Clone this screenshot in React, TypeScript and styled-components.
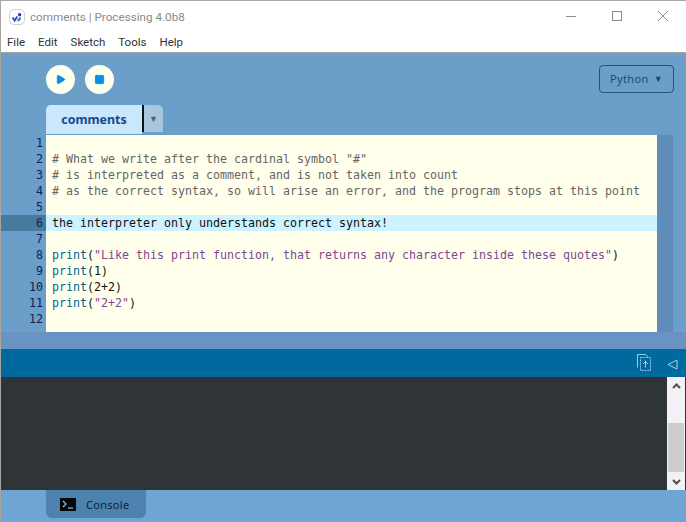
import styled, { createGlobalStyle } from "styled-components";
import { Play, Square } from "lucide-react";

const GlobalStyle = createGlobalStyle`
  html, body {
    margin: 0;
    padding: 0;
    background: #6b9fc9;
  }
`;

const Window = styled.div`
  width: 686px;
  height: 522px;
  display: flex;
  flex-direction: column;
  overflow: hidden;
  box-sizing: border-box;
  border-left: 1px solid #a8a59e;
  font-family: Roboto, sans-serif;
`;

const TitleBar = styled.div`
  height: 30px;
  background: #fff;
  border-top: 1px solid #a9a9a9;
  box-sizing: border-box;
  display: flex;
  align-items: center;
  padding: 2px 0 0 8px;
  color: #8a8a8a;
`;

const AppIcon = styled.svg`
  width: 16px;
  height: 16px;
  margin-right: 5px;
`;

const TitleText = styled.span`
  flex: 1;
  font-size: 11.7px;
`;

const WinButtons = styled.div`
  display: flex;
  align-items: center;
  margin-bottom: 2px;
`;

const WinButton = styled.svg`
  width: 46px;
  height: 12px;
`;

const MenuBar = styled.div`
  height: 23px;
  background: #fff;
  border-bottom: 1px solid #a4a4a4;
  box-sizing: border-box;
  display: flex;
  align-items: center;
  padding: 2px 0 0 6px;
  gap: 13px;
  font-size: 11.5px;
  color: #333;
`;

const Header = styled.div`
  height: 82px;
  background: #6b9fc9;
  display: flex;
  flex-direction: column;
  padding-left: 45px;
  box-sizing: border-box;
  position: relative;
`;

const Controls = styled.div`
  display: flex;
  gap: 10px;
  padding-top: 12px;
  height: 41px;
`;

const RoundButton = styled.button`
  width: 29px;
  height: 29px;
  border: 0;
  padding: 0;
  border-radius: 50%;
  background: #fffff0;
  display: flex;
  align-items: center;
  justify-content: center;
`;

const ModeButton = styled.div`
  position: absolute;
  top: 12px;
  right: 12px;
  width: 75px;
  height: 28px;
  box-sizing: border-box;
  padding-bottom: 2px;
  border: 1px solid #1a5880;
  border-radius: 4px;
  color: #0f4f7d;
  font-family: "Noto Sans", sans-serif;
  font-size: 11px;
  display: flex;
  align-items: center;
  justify-content: center;
  gap: 5px;
  letter-spacing: 0.4px;
`;

const Caret = styled.span`
  font-size: 9px;
`;

const TabRow = styled.div`
  display: flex;
  align-items: flex-end;
  height: 29px;
  margin-top: -1px;
`;

const Tab = styled.div`
  width: 96px;
  height: 29px;
  background: #c9e8fd;
  border-radius: 5px 0 0 0;
  box-sizing: border-box;
  display: flex;
  align-items: center;
  justify-content: center;
  color: #17468f;
  font-family: "Noto Sans", sans-serif;
  font-size: 12.4px;
  font-weight: 700;
`;

const TabMenu = styled.div`
  width: 21px;
  height: 27px;
  align-self: flex-start;
  background: #a9c6df;
  border-left: 2px solid #111;
  border-radius: 0 5px 0 0;
  box-sizing: border-box;
  display: flex;
  align-items: center;
  justify-content: center;
  color: #555f6a;
  font-size: 9px;
`;

const EditorRow = styled.div`
  height: 197px;
  display: flex;
  background: #6b9fc9;
`;

const Gutter = styled.div`
  width: 45px;
  flex-shrink: 0;
`;

const Code = styled.div`
  width: 611px;
  flex-shrink: 0;
  background: #ffffec;
`;

const Track = styled.div`
  width: 16px;
  background: #5f8db9;
`;

const Mono = `
  font-family: "DejaVu Sans Mono", monospace;
  font-size: 11.63px;
  line-height: 16px;
  height: 16px;
  white-space: pre;
`;

const LineNo = styled.div<{ $active?: boolean }>`
  ${Mono}
  text-align: right;
  padding-right: 3px;
  color: #0f1f4d;
  background: ${(p) => (p.$active ? "#48799f" : "transparent")};
`;

const Line = styled.div<{ $active?: boolean }>`
  ${Mono}
  padding-left: 6px;
  color: #111;
  background: ${(p) => (p.$active ? "#ccf3ff" : "transparent")};
`;

const Comment = styled.span`
  color: #666;
`;

const Fn = styled.span`
  color: #006699;
`;

const Str = styled.span`
  color: #7d4793;
`;

const Band = styled.div`
  height: 17px;
  background: #6a93c3;
`;

const StatusBar = styled.div`
  height: 28px;
  background: #006a9e;
  display: flex;
  align-items: center;
  justify-content: flex-end;
  gap: 15px;
  padding-right: 8px;
`;

const ConsoleArea = styled.div`
  height: 113px;
  display: flex;
  background: #2f3437;
`;

const ConsoleText = styled.div`
  flex: 1;
`;

const ScrollBar = styled.div`
  width: 18px;
  margin-right: 1px;
  background: #f3f1f6;
  display: flex;
  flex-direction: column;
`;

const ScrollArrow = styled.div`
  height: 17px;
  display: flex;
  align-items: center;
  justify-content: center;
`;

const ScrollSpace = styled.div`
  flex: 1;
  padding-top: 29px;
  display: flex;
`;

const Thumb = styled.div`
  flex: 1;
  height: 49px;
  margin: 0 1px;
  background: #cdcdcd;
`;

const Footer = styled.div`
  flex: 1;
  background: #6ea5d3;
  padding-left: 45px;
`;

const ConsoleTab = styled.div`
  width: 100px;
  height: 28px;
  background: #4c82ad;
  border-radius: 0 0 6px 6px;
  display: flex;
  align-items: center;
  gap: 10px;
  padding-left: 14px;
  box-sizing: border-box;
  color: #0d2340;
  font-family: "Noto Sans", sans-serif;
  font-size: 11px;
  letter-spacing: 0.3px;
`;

const Prompt = styled.svg`
  width: 16px;
  height: 13px;
`;

const ClipboardIcon = styled.svg`
  width: 15px;
  height: 18px;
  fill: none;
  stroke: #9ccbe6;
`;

const CollapseIcon = styled.svg`
  width: 11px;
  height: 11px;
  margin-top: 2px;
  fill: none;
  stroke: #a9d3ea;
`;

const App = () => {
  return (
    <Window>
      <GlobalStyle />
      <TitleBar>
        <AppIcon viewBox="0 0 16 16">
          <rect x="0.5" y="0.5" width="15" height="15" rx="4" fill="#fff" stroke="#cfd3cf" />
          <path d="M3.5 8.5l2.2 3 2.6-4" fill="none" stroke="#2a52c4" strokeWidth="2" />
          <circle cx="10.6" cy="5.8" r="1.7" fill="#1f3fa8" />
          <path d="M11 8.5a3 3 0 0 1-2.6 3" fill="none" stroke="#2f6ad0" strokeWidth="2" />
        </AppIcon>
        <TitleText>comments | Processing 4.0b8</TitleText>
        <WinButtons>
          <WinButton viewBox="0 0 46 12">
            <path d="M18 6.5h10" stroke="#8c8c8c" />
          </WinButton>
          <WinButton viewBox="0 0 46 12">
            <rect x="18.5" y="1.5" width="9" height="9" fill="none" stroke="#8c8c8c" />
          </WinButton>
          <WinButton viewBox="0 0 46 12">
            <path d="M18 1l10 10M28 1L18 11" stroke="#8c8c8c" />
          </WinButton>
        </WinButtons>
      </TitleBar>
      <MenuBar>
        <span>File</span>
        <span>Edit</span>
        <span>Sketch</span>
        <span>Tools</span>
        <span>Help</span>
      </MenuBar>
      <Header>
        <Controls>
          <RoundButton>
            <Play size={11} color="#0a8fe6" fill="#0a8fe6" />
          </RoundButton>
          <RoundButton>
            <Square size={11} color="#0a8fe6" fill="#0a8fe6" />
          </RoundButton>
        </Controls>
        <ModeButton>
          Python <Caret>▼</Caret>
        </ModeButton>
        <TabRow>
          <Tab>comments</Tab>
          <TabMenu>▼</TabMenu>
        </TabRow>
      </Header>
      <EditorRow>
        <Gutter>
          {[1, 2, 3, 4, 5, 6, 7, 8, 9, 10, 11, 12].map((n) => (
            <LineNo key={n} $active={n === 6}>
              {n}
            </LineNo>
          ))}
        </Gutter>
        <Code>
          <Line> </Line>
          <Line>
            <Comment># What we write after the cardinal symbol "#"</Comment>
          </Line>
          <Line>
            <Comment># is interpreted as a comment, and is not taken into count</Comment>
          </Line>
          <Line>
            <Comment># as the correct syntax, so will arise an error, and the program stops at this point</Comment>
          </Line>
          <Line> </Line>
          <Line $active>the interpreter only understands correct syntax!</Line>
          <Line> </Line>
          <Line>
            <Fn>print</Fn>(<Str>"Like this print function, that returns any character inside these quotes"</Str>)
          </Line>
          <Line>
            <Fn>print</Fn>(1)
          </Line>
          <Line>
            <Fn>print</Fn>(2+2)
          </Line>
          <Line>
            <Fn>print</Fn>(<Str>"2+2"</Str>)
          </Line>
          <Line> </Line>
        </Code>
        <Track />
      </EditorRow>
      <Band />
      <StatusBar>
        <ClipboardIcon viewBox="0 0 15 18">
          <path d="M0.5 13.5v-13h8l2 2v1" />
          <path d="M3.5 3.5h10v13h-10z" strokeDasharray="2 1" />
          <path d="M8.5 6.5v7M6 10l2.5-2.5L11 10" />
        </ClipboardIcon>
        <CollapseIcon viewBox="0 0 11 11">
          <path d="M10 1v9L1 5.5z" />
        </CollapseIcon>
      </StatusBar>
      <ConsoleArea>
        <ConsoleText />
        <ScrollBar>
          <ScrollArrow>
            <svg width="9" height="6" viewBox="0 0 9 6" fill="none" stroke="#505050" strokeWidth="2">
              <path d="M1 5l3.5-3.5L8 5" />
            </svg>
          </ScrollArrow>
          <ScrollSpace>
            <Thumb />
          </ScrollSpace>
          <ScrollArrow>
            <svg width="9" height="6" viewBox="0 0 9 6" fill="none" stroke="#505050" strokeWidth="2">
              <path d="M1 1l3.5 3.5L8 1" />
            </svg>
          </ScrollArrow>
        </ScrollBar>
      </ConsoleArea>
      <Footer>
        <ConsoleTab>
          <Prompt viewBox="0 0 16 13">
            <rect width="16" height="13" fill="#050505" />
            <path d="M3 3l3 3-3 3" fill="none" stroke="#7fc4e8" strokeWidth="1.3" />
            <path d="M8 10h5" stroke="#7fc4e8" strokeWidth="1.2" />
          </Prompt>
          Console
        </ConsoleTab>
      </Footer>
    </Window>
  );
};

export default App;
